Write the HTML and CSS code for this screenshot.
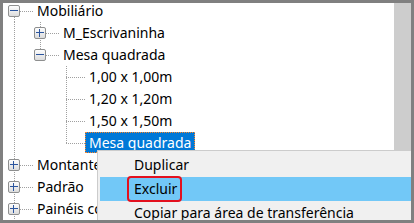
FILE: index.html
```html
<!DOCTYPE html>
<html>
<head>
<meta charset="utf-8">
<link rel="stylesheet" href="styles.css">
</head>
<body>
<div class="window">
  <div class="tree">
    <div class="row top"><span class="c first"><span class="box minus"></span></span><span class="label">Mobiliário</span></div>
    <div class="row"><span class="g v"></span><span class="c"><span class="box plus"></span></span><span class="label">M_Escrivaninha</span></div>
    <div class="row"><span class="g v"></span><span class="c last"><span class="box minus"></span></span><span class="label">Mesa quadrada</span></div>
    <div class="row"><span class="g v"></span><span class="g"></span><span class="c"></span><span class="label">1,00 x 1,00m</span></div>
    <div class="row"><span class="g v"></span><span class="g"></span><span class="c"></span><span class="label">1,20 x 1,20m</span></div>
    <div class="row"><span class="g v"></span><span class="g"></span><span class="c"></span><span class="label">1,50 x 1,50m</span></div>
    <div class="row"><span class="g v"></span><span class="g"></span><span class="c last"></span><span class="label selected">Mesa quadrada</span></div>
    <div class="row"><span class="c"><span class="box plus"></span></span><span class="label">Montantes</span></div>
    <div class="row"><span class="c"><span class="box plus"></span></span><span class="label">Padrão</span></div>
    <div class="row"><span class="c"><span class="box plus"></span></span><span class="label">Painéis com</span></div>
  </div>
  <div class="scrollbar"></div>
  <div class="menu">
    <div class="item">Duplicar</div>
    <div class="item hot"><span class="ring">Excluir</span></div>
    <div class="item">Copiar para área de transferência</div>
  </div>
</div>
</body>
</html>
```
FILE: styles.css
```css
* { box-sizing: border-box; }
html, body { margin: 0; padding: 0; background: #fff; }
body {
  font-family: "Noto Sans", "DejaVu Sans", sans-serif;
  font-size: 14px;
  color: #000;
}
.window {
  width: 414px;
  height: 223px;
  border: 3px solid #808080;
  display: flex;
  overflow: hidden;
  position: relative;
}
.tree {
  flex: 1;
  background: #fff;
  overflow: hidden;
}
.scrollbar {
  width: 17px;
  flex: none;
  background: #cdcdcd;
}
.row {
  display: flex;
  height: 22px;
  align-items: stretch;
  white-space: nowrap;
}
.row.top {
  height: 19px;
  align-items: flex-start;
}
.g { width: 26px; flex: none; }
.g.v {
  background: repeating-linear-gradient(to bottom, #a0a0a0 0 1px, transparent 1px 2px) 11px 0 / 1px 100% no-repeat;
}
.c {
  width: 31px;
  flex: none;
  display: flex;
  align-items: center;
  background-image:
    repeating-linear-gradient(to right, #a0a0a0 0 1px, transparent 1px 2px),
    repeating-linear-gradient(to bottom, #a0a0a0 0 1px, transparent 1px 2px);
  background-repeat: no-repeat;
  background-position: 11px 11px, 11px 0;
  background-size: 20px 1px, 1px 100%;
}
.c.last { background-size: 20px 1px, 1px 11px; }
.row.top .c.first {
  height: 19px;
  padding-bottom: 3px;
  background-position: 11px 8px, 11px 8px;
  background-size: 20px 1px, 1px 11px;
}
.box {
  width: 12px;
  height: 12px;
  margin-left: 5px;
  border: 1px solid #8e8f8f;
  border-radius: 2px;
  background: linear-gradient(#fdfdfd, #dcdcdc);
}
.box.minus {
  background:
    linear-gradient(#2b559e, #2b559e) 1px 4px / 8px 1px no-repeat,
    linear-gradient(#fdfdfd, #dcdcdc);
}
.box.plus {
  background:
    linear-gradient(#2b559e, #2b559e) 1px 4px / 8px 1px no-repeat,
    linear-gradient(#2b559e, #2b559e) 4px 1px / 1px 8px no-repeat,
    linear-gradient(#fdfdfd, #dcdcdc);
}
.label {
  padding: 0 3px;
  height: 21px;
  line-height: 19px;
  border: 1px solid transparent;
  margin-left: -1px;
}
.row.top .label {
  height: 16px;
  line-height: 14px;
}
.label.selected {
  background: #0078d7;
  color: #fff;
  border: 1px dotted #ff8728;
}
.menu {
  position: absolute;
  left: 94px;
  top: 147px;
  width: 420px;
  background: #f0f0f0;
  border: 1px solid #cccccc;
  padding: 2px;
}
.item {
  height: 24px;
  line-height: 24px;
  padding-left: 34px;
  white-space: nowrap;
}
.item.hot { background: #72c8f7; }
.ring {
  display: inline-block;
  height: 26px;
  line-height: 22px;
  margin: -1px 0 -1px -7px;
  padding: 0 3px 0 5px;
  border: 2px solid #e3101e;
  border-radius: 4px;
  vertical-align: top;
}
```
